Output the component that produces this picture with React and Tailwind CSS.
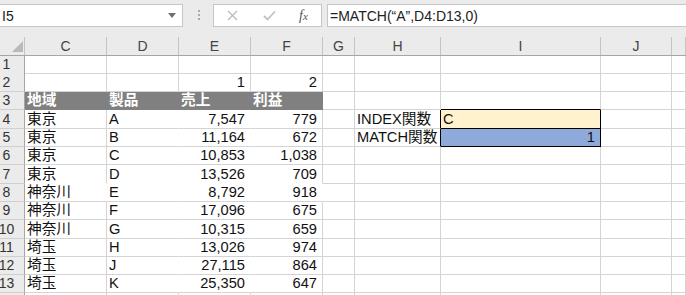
import React from 'react';

const GRID = 'grid grid-cols-[25px_82px_72px_72px_72px_32px_86px_160px_71px_14px]';

const R = {
  g: 'border-r border-r-[#d4d4d4]',
  k: 'border-r border-r-black',
  n: 'border-r border-r-transparent',
  h: 'border-r border-r-[#808080]',
};
const B = {
  g: 'border-b border-b-[#d4d4d4]',
  k: 'border-b border-b-black',
  n: 'border-b border-b-transparent',
  h: 'border-b border-b-[#808080]',
};

const HEIGHTS = ['h-[17px]', 'h-[19px]', 'h-[18px]', 'h-[19px]', 'h-[18px]', 'h-[18px]', 'h-[19px]', 'h-[18px]', 'h-[18px]', 'h-[19px]', 'h-[18px]', 'h-[18px]', 'h-[18px]', 'h-[18px]'];

const DATA = [
  ['東京', 'A', '7,547', '779'],
  ['東京', 'B', '11,164', '672'],
  ['東京', 'C', '10,853', '1,038'],
  ['東京', 'D', '13,526', '709'],
  ['神奈川', 'E', '8,792', '918'],
  ['神奈川', 'F', '17,096', '675'],
  ['神奈川', 'G', '10,315', '659'],
  ['埼玉', 'H', '13,026', '974'],
  ['埼玉', 'J', '27,115', '864'],
  ['埼玉', 'K', '25,350', '647'],
];

function emptyCells() {
  return Array.from({ length: 9 }, () => ({ t: '', r: 'g', b: 'g', a: 'l', bg: '' }));
}

function buildRow(n) {
  const c = emptyCells();
  if (n === 2) {
    c[2] = { ...c[2], t: '1', a: 'r' };
    c[3] = { ...c[3], t: '2', a: 'r' };
  }
  if (n === 3) {
    ['地域', '製品', '売上', '利益'].forEach((t, i) => {
      c[i] = { t, r: 'h', b: 'h', a: 'l', bg: 'bg-[#808080] text-white font-bold' };
    });
    c[6] = { ...c[6], b: 'k' };
  }
  if (n >= 4 && n <= 13) {
    const d = DATA[n - 4];
    c[0] = { ...c[0], t: d[0] };
    c[1] = { ...c[1], t: d[1], r: 'n' };
    c[2] = { ...c[2], t: d[2], a: 'r', r: 'n' };
    c[3] = { ...c[3], t: d[3], a: 'r' };
    if (n === 7) {
      for (let i = 0; i < 4; i++) c[i] = { ...c[i], b: 'n' };
    }
    if (n === 8) {
      c[0] = { ...c[0], r: 'n' };
      c[3] = { ...c[3], r: 'n' };
    }
  }
  if (n === 4) {
    c[5] = { ...c[5], t: 'INDEX関数', r: 'k' };
    c[6] = { ...c[6], t: 'C', r: 'k', b: 'k', bg: 'bg-[#fff2cc]' };
  }
  if (n === 5) {
    c[5] = { ...c[5], t: 'MATCH関数', r: 'k' };
    c[6] = { ...c[6], t: '1', a: 'r', r: 'k', b: 'k', bg: 'bg-[#8eaadb]' };
  }
  return c;
}

function Cell({ cell }) {
  const align = cell.a === 'r' ? 'justify-end pr-[5px]' : 'justify-start pl-[2px]';
  return (
    <div className={`flex items-end pb-[1px] whitespace-nowrap overflow-visible ${align} ${R[cell.r]} ${B[cell.b]} ${cell.bg}`}>
      <span className="leading-[16px]">{cell.t}</span>
    </div>
  );
}

function FormulaBar() {
  return (
    <div className="flex h-[37px] bg-[#ebebeb] items-start">
      <div className="mt-[4px] w-[183px] h-[23px] bg-white border border-[#c6c6c6] border-l-0 flex items-center justify-between">
        <span className="pl-[2px] text-[14px] text-[#222] leading-none">I5</span>
        <svg width="8" height="5" viewBox="0 0 8 5" className="mr-[6px]">
          <path d="M0 0 L8 0 L4 5 Z" fill="#6f6f6f" />
        </svg>
      </div>
      <div className="ml-[15px] mt-[10px] flex flex-col gap-[2px]">
        <div className="w-[2px] h-[2px] bg-[#a8a8a8]" />
        <div className="w-[2px] h-[2px] bg-[#a8a8a8]" />
        <div className="w-[2px] h-[2px] bg-[#a8a8a8]" />
      </div>
      <div className="ml-[13px] mt-[4px] w-[109px] h-[23px] bg-white border border-[#c6c6c6] flex items-center">
        <svg width="11" height="11" viewBox="0 0 11 11" className="ml-[13px]">
          <path d="M1 1 L10 10 M10 1 L1 10" stroke="#bdbdbd" strokeWidth="1.4" fill="none" />
        </svg>
        <svg width="13" height="11" viewBox="0 0 13 11" className="ml-[25px]">
          <path d="M1 6 L4.5 9.5 L12 1.5" stroke="#c2c2c2" strokeWidth="1.8" fill="none" />
        </svg>
        <span className="ml-[23px] font-['Liberation_Serif',serif] italic text-[14px] text-[#555] leading-none">
          f<span className="text-[11px]">x</span>
        </span>
      </div>
      <div className="ml-[5px] mt-[4px] flex-1 h-[23px] bg-white border border-[#c6c6c6] border-r-0 flex items-center">
        <span className="pl-[2px] text-[14px] text-[#222] leading-none">=MATCH(“A”,D4:D13,0)</span>
      </div>
    </div>
  );
}

function ColumnHeader() {
  const letters = ['C', 'D', 'E', 'F', 'G', 'H', 'I', 'J', ''];
  return (
    <div className={`${GRID} h-[19px] bg-[#ebebeb] border-b border-b-[#a6a6a6]`}>
      <div className="relative border-r border-r-[#c4c4c4]">
        <svg width="11" height="11" viewBox="0 0 11 11" className="absolute left-[12px] top-[4px]">
          <path d="M11 0 L11 11 L0 11 Z" fill="#b9b9b9" />
        </svg>
      </div>
      {letters.map((l, i) => (
        <div key={i} className="flex items-end justify-center pb-[1px] border-r border-r-[#c4c4c4] text-[14px] text-[#444]">
          <span className="leading-[16px]">{l}</span>
        </div>
      ))}
    </div>
  );
}

export default function App() {
  const rows = Array.from({ length: 14 }, (_, i) => i + 1);
  return (
    <div className="w-[686px] h-[295px] overflow-hidden bg-white text-[#111] font-['Liberation_Sans','Noto_Sans_CJK_JP',sans-serif]">
      <FormulaBar />
      <ColumnHeader />
      {rows.map((n) => {
        const cells = buildRow(n);
        return (
          <div key={n} className={`${GRID} ${HEIGHTS[n - 1]} text-[14.67px]`}>
            <div className="bg-[#ebebeb] border-r border-r-[#a6a6a6] border-b border-b-[#cfcfcf] flex items-end pb-[1px]">
              <div className="w-[13px] flex justify-center text-[14px] text-[#333]">
                <span className="leading-[16px]">{n <= 13 ? n : ''}</span>
              </div>
            </div>
            {cells.map((cell, i) => (
              <Cell key={i} cell={cell} />
            ))}
          </div>
        );
      })}
    </div>
  );
}
